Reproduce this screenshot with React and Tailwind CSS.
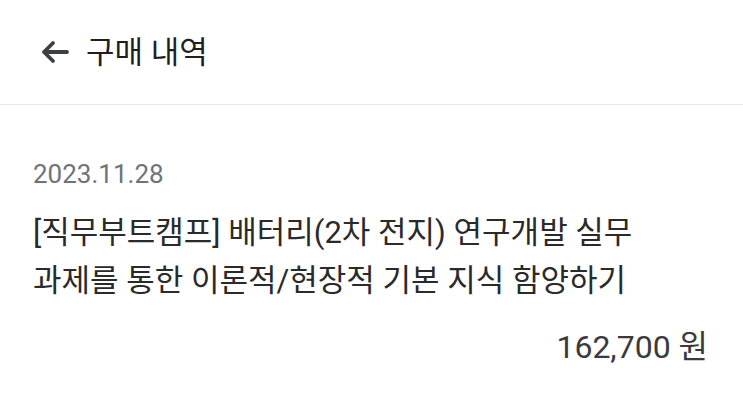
import React from 'react';

export default function App() {
  return (
    <div className="w-[743px] h-[402px] bg-white overflow-hidden" style={{ fontFamily: "Roboto, 'Noto Sans CJK KR', sans-serif" }}>
      {/* Header */}
      <div className="h-[105px] flex items-center pl-[41px] border-b border-[#e8e8e8]">
        <svg width="28" height="24" viewBox="0 0 28 24" fill="none" stroke="#3c4043" strokeWidth="3.8" strokeLinecap="round" strokeLinejoin="round">
          <path d="M26 12H3M12 3L3 12l9 9" />
        </svg>
        <h1 className="ml-[17px] text-[31px] text-[#1f1f1f] leading-none">구매 내역</h1>
      </div>

      {/* Order item */}
      <div className="pl-[33px] pr-[35px] pt-[56px]">
        <p className="text-[26px] text-[#6f7378] leading-none">2023.11.28</p>
        <p className="mt-[22px] text-[31px] leading-[48px] text-[#2a2a2a]">
          [직무부트캠프] 배터리(2차 전지) 연구개발 실무<br />
          과제를 통한 이론적/현장적 기본 지식 함양하기
        </p>
        <p className="mt-[26px] text-right text-[32px] leading-none text-[#3a3a3a]">162,700 원</p>
      </div>
    </div>
  );
}
